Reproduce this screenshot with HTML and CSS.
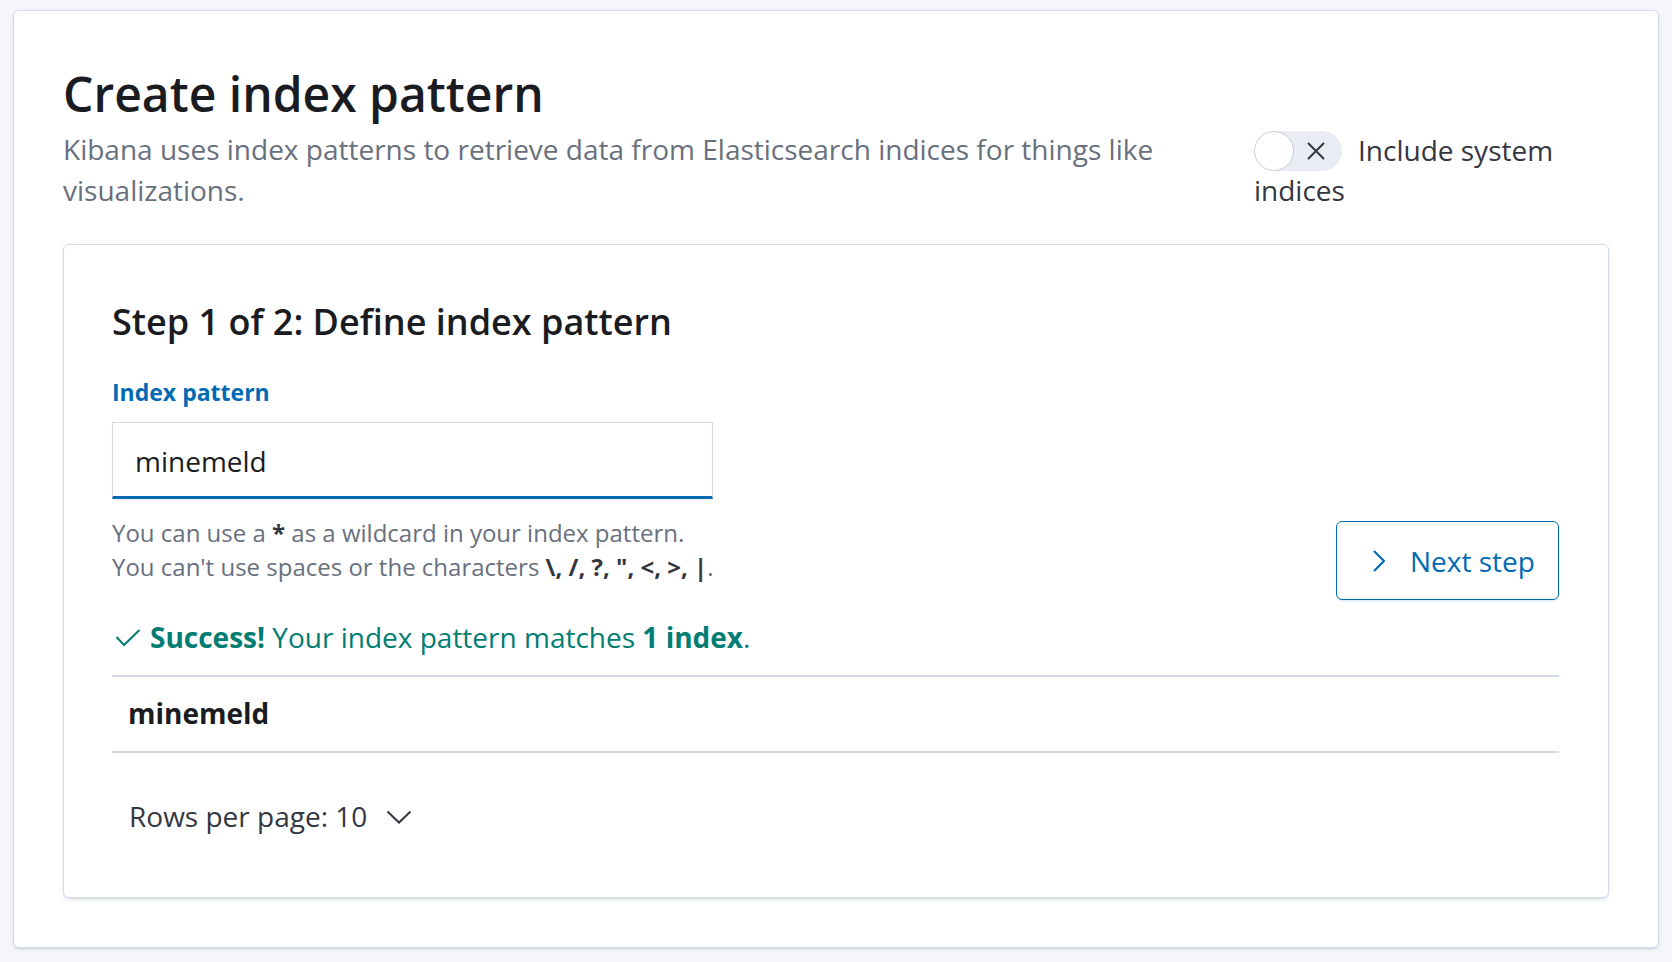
FILE: index.html
```html
<!DOCTYPE html>
<html lang="en">
<head>
<meta charset="utf-8">
<title>Create index pattern</title>
<link rel="stylesheet" href="styles.css">
</head>
<body>
<div class="panel">
  <div class="header">
    <div class="header-main">
      <h1 class="page-title">Create index pattern</h1>
      <p class="desc">Kibana uses index patterns to retrieve data from Elasticsearch indices for things like visualizations.</p>
    </div>
    <div class="header-side">
      <span class="switch"><span class="switch-knob"></span><svg class="switch-x" width="20" height="20" viewBox="0 0 20 20"><path d="M2.5 2.5 L17.5 17.5 M17.5 2.5 L2.5 17.5" stroke="#343741" stroke-width="2" fill="none" stroke-linecap="round"/></svg></span><span class="switch-label">Include system indices</span>
    </div>
  </div>

  <div class="card">
    <h2 class="step-title">Step 1 of 2: Define index pattern</h2>
    <div class="form-line">
      <div class="form-row">
        <label class="form-label">Index pattern</label>
        <div class="field">minemeld</div>
        <div class="help">
          <div>You can use a <b>*</b> as a wildcard in your index pattern.</div>
          <div>You can't use spaces or the characters <b>\, /, ?, ", &lt;, &gt;, |</b>.</div>
        </div>
      </div>
      <button class="next-btn"><svg class="chev-right" width="14" height="24" viewBox="0 0 14 24"><path d="M2 2 L12 12 L2 22" stroke="#006bb4" stroke-width="2.2" fill="none" stroke-linejoin="round"/></svg><span>Next step</span></button>
    </div>
    <div class="success"><svg class="check" width="26" height="18" viewBox="0 0 26 18"><path d="M1.5 8 L9 16 L24.5 1" stroke="#017d73" stroke-width="2" fill="none"/></svg><span><b>Success!</b> Your index pattern matches <b>1 index</b>.</span></div>
    <div class="table">
      <div class="table-row">minemeld</div>
    </div>
    <div class="pager">Rows per page: 10<svg class="chev-down" width="26" height="14" viewBox="0 0 26 14"><path d="M1.5 1.5 L13 12.5 L24.5 1.5" stroke="#343741" stroke-width="2" fill="none"/></svg></div>
  </div>
</div>
</body>
</html>
```

FILE: styles.css
```css
* { box-sizing: border-box; }
html, body { margin: 0; padding: 0; }
body {
  background: #f5f7fa;
  font-family: "Open Sans", "Liberation Sans", sans-serif;
  color: #343741;
  width: 1672px;
  height: 962px;
  overflow: hidden;
}
.panel {
  margin: 10px 13px 0 13px;
  height: 938px;
  background: #fff;
  border: 1px solid #d3dae6;
  border-radius: 6px;
  box-shadow: 0 2px 3px -1px rgba(152,162,179,.35), 0 1px 6px -2px rgba(152,162,179,.3);
  padding: 54px 49px 0 49px;
}
.header {
  display: flex;
  align-items: flex-start;
  gap: 24px;
}
.header-main { flex: 1; }
.page-title {
  margin: 0;
  font-size: 48px;
  line-height: 58px;
  font-weight: 600;
  color: #1a1c21;
}
.desc {
  margin: 6px 0 0 0;
  font-size: 28px;
  line-height: 41px;
  color: #69707d;
}
.header-side {
  width: 355px;
  flex: none;
  margin-top: 66px;
  font-size: 28px;
  line-height: 39px;
  color: #343741;
}
.switch {
  display: inline-block;
  position: relative;
  width: 88px;
  height: 40px;
  border-radius: 20px;
  background: #e9edf3;
  vertical-align: -10px;
  overflow: hidden;
}
.switch-knob {
  position: absolute;
  left: 0;
  top: 0;
  width: 40px;
  height: 40px;
  border-radius: 50%;
  background: #fff;
  border: 1.5px solid #c5cad3;
}
.switch-x {
  position: absolute;
  left: 52px;
  top: 10px;
}
.switch-label { margin-left: 16px; }

.card {
  margin-top: 33px;
  height: 654px;
  border: 1px solid #d3dae6;
  border-radius: 6px;
  background: #fff;
  box-shadow: 0 2px 3px -1px rgba(152,162,179,.35), 0 1px 6px -2px rgba(152,162,179,.3);
  padding: 56px 49px 0 48px;
}
.step-title {
  margin: 0;
  font-size: 36px;
  line-height: 42px;
  font-weight: 600;
  color: #1a1c21;
}
.form-line {
  display: flex;
  align-items: flex-end;
  justify-content: space-between;
}
.form-row {
  width: 601px;
  padding-bottom: 16px;
}
.form-label {
  display: block;
  margin-top: 34px;
  font-size: 23px;
  line-height: 30px;
  font-weight: 700;
  color: #006bb4;
}
.field {
  margin-top: 15px;
  height: 77px;
  background: #fff;
  border: 1px solid #d6dae0;
  border-bottom: 3px solid #006bb4;
  box-shadow: 0 2px 4px -2px rgba(0,0,0,.12);
  display: flex;
  align-items: center;
  padding: 3px 0 0 22px;
  font-size: 28px;
  line-height: 38px;
  color: #1a1c21;
}
.help {
  margin-top: 17px;
  font-size: 24px;
  line-height: 34px;
  color: #69707d;
  white-space: nowrap;
}
.help b { color: #343741; font-weight: 700; }
.next-btn {
  width: 223px;
  height: 79px;
  border: 1.5px solid #006bb4;
  border-radius: 6px;
  background: #fff;
  box-shadow: 0 2px 3px -1px rgba(0,107,180,.18);
  display: flex;
  align-items: center;
  padding: 0 0 0 35px;
  font-family: "Open Sans", "Liberation Sans", sans-serif;
  font-size: 28px;
  color: #006bb4;
  cursor: pointer;
}
.chev-right { margin-right: 24px; }
.success {
  margin-top: 19px;
  display: flex;
  align-items: center;
  font-size: 28px;
  line-height: 36px;
  color: #017d73;
}
.success b { font-weight: 700; }
.check { margin: 2px 9px 0 3px; }
.table {
  margin-top: 20px;
  border-top: 2px solid #d3dae6;
  border-bottom: 2px solid #d3dae6;
}
.table-row {
  padding: 18px 0 20px 16px;
  font-size: 28px;
  line-height: 36px;
  font-weight: 700;
  color: #1a1c21;
}
.pager {
  margin-top: 45px;
  padding-left: 17px;
  display: flex;
  align-items: center;
  font-size: 28px;
  line-height: 36px;
  color: #343741;
}
.chev-down { margin-left: 19px; margin-top: 2px; }
```
